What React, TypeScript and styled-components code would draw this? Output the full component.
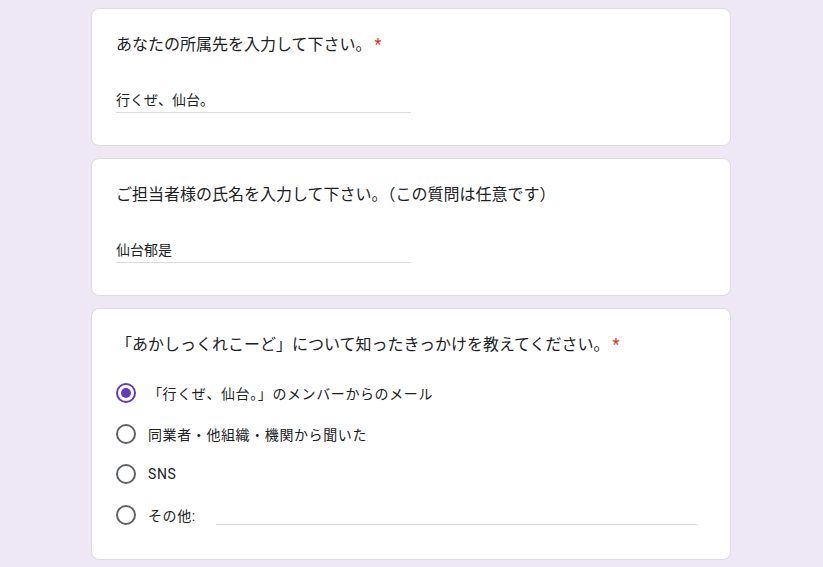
import styled, { createGlobalStyle } from "styled-components";

const GlobalStyle = createGlobalStyle`
  html, body {
    margin: 0;
    padding: 0;
    background: #ede7f6;
  }
  body {
    font-family: Roboto, "Noto Sans CJK JP", sans-serif;
    color: #202124;
  }
`;

const Page = styled.main`
  display: flex;
  flex-direction: column;
  align-items: center;
  gap: 12px;
  padding: 8px 1px 24px 0;
`;

const Card = styled.section`
  box-sizing: border-box;
  width: 640px;
  background: #fff;
  border: 1px solid #dadce0;
  border-radius: 8px;
  padding: 24px 24px 24px;
`;

const Title = styled.div`
  font-size: 16px;
  line-height: 24px;
  color: #202124;
`;

const Required = styled.span`
  color: #d93025;
  padding-left: 3px;
  font-family: Roboto, sans-serif;
`;

const TextAnswer = styled.div`
  width: 50%;
  margin-top: 33px;
  margin-bottom: 8px;
  padding-bottom: 2px;
  border-bottom: 1px solid #dadce0;
  font-size: 14px;
  line-height: 20px;
  color: #202124;
`;

const Options = styled.div`
  display: flex;
  flex-direction: column;
  margin-top: 16px;
`;

const Option = styled.label`
  display: flex;
  align-items: center;
  height: 40.5px;
  font-size: 14px;
  letter-spacing: 0.6px;
  color: #202124;
`;

const Radio = styled.span<{ $checked?: boolean }>`
  box-sizing: border-box;
  flex: none;
  width: 20px;
  height: 20px;
  margin-right: 12px;
  border-radius: 50%;
  border: 2px solid ${(p) => (p.$checked ? "#673ab7" : "#5f6368")};
  display: flex;
  align-items: center;
  justify-content: center;

  &::after {
    content: "";
    width: 10px;
    height: 10px;
    border-radius: 50%;
    background: #673ab7;
    display: ${(p) => (p.$checked ? "block" : "none")};
  }
`;

const OtherField = styled.span`
  flex: 1;
  align-self: stretch;
  margin: 0 9px 10px 20px;
  border-bottom: 1px solid #dadce0;
`;

const choices = [
  { label: "「行くぜ、仙台。」のメンバーからのメール", checked: true },
  { label: "同業者・他組織・機関から聞いた" },
  { label: "SNS" },
];

export default function App() {
  return (
    <>
      <GlobalStyle />
      <Page>
        <Card>
          <Title>
            あなたの所属先を入力して下さい。<Required>*</Required>
          </Title>
          <TextAnswer>行くぜ、仙台。</TextAnswer>
        </Card>

        <Card>
          <Title>ご担当者様の氏名を入力して下さい。（この質問は任意です）</Title>
          <TextAnswer>仙台郁是</TextAnswer>
        </Card>

        <Card>
          <Title>
            「あかしっくれこーど」について知ったきっかけを教えてください。
            <Required>*</Required>
          </Title>
          <Options>
            {choices.map((c) => (
              <Option key={c.label}>
                <Radio $checked={c.checked} />
                {c.label}
              </Option>
            ))}
            <Option>
              <Radio />
              その他:
              <OtherField />
            </Option>
          </Options>
        </Card>
      </Page>
    </>
  );
}
